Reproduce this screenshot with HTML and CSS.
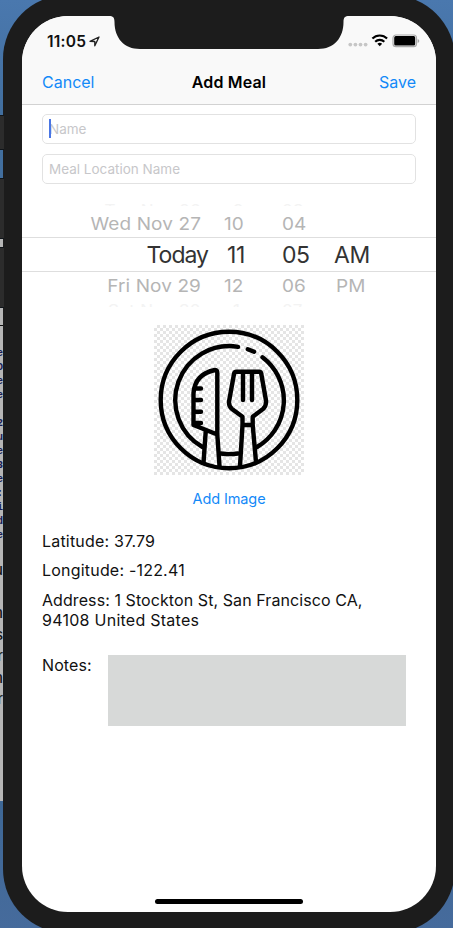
FILE: index.html
```html
<!DOCTYPE html>
<html lang="en">
<head>
<meta charset="utf-8">
<title>Add Meal</title>
<link rel="stylesheet" href="styles.css">
</head>
<body>
<div class="backdrop" aria-hidden="true">
  <div class="tile blue t1"></div>
  <div class="tile dark t2"></div>
  <div class="tile blue t3"></div>
  <div class="tile dark t4"></div>
  <div class="tile light t5"></div>
  <div class="tile dark t6"></div>
  <div class="tile light t7"></div>
  <div class="tile light code"><div>e<br>O<br>e<br>e<br><br>2<br>u<br>e<br>3<br>e<br>:<br>i<br>d<br>e</div></div>
  <div class="tile light prose"><div>u<br><br>n<br>s<br>r<br>n<br>r</div></div>
</div>
<div class="device">
  <div class="screen">
    <header class="top">
      <div class="status">
        <span class="time">11:05</span>
        <svg class="loc" width="11" height="11" viewBox="0 0 11 11"><path d="M1 5.3 10 1 5.8 9.8V5.5Z" fill="none" stroke="#222" stroke-width="1.35" stroke-linejoin="round"/></svg>
        <svg class="signals" width="72" height="14" viewBox="0 0 72 14">
          <g fill="#c6c6c6"><circle cx="2.3" cy="10.6" r="1.9"/><circle cx="7.4" cy="10.6" r="1.9"/><circle cx="12.5" cy="10.6" r="1.9"/><circle cx="17.6" cy="10.6" r="1.9"/></g>
          <g fill="none" stroke="#000" stroke-width="2.1"><path d="M24.4 4.6a10.4 10.4 0 0 1 14.7 0"/><path d="M27.2 7.7a6.5 6.5 0 0 1 9.1 0"/></g>
          <path d="m31.75 12.2-2.4-2.5a3.6 3.6 0 0 1 4.8 0Z"/>
          <rect x="45" y="1" width="23.5" height="11.7" rx="3" fill="#f9f9f9" stroke="#aaa" stroke-width="1.2"/>
          <rect x="46.2" y="2.1" width="21" height="9.5" rx="1.6"/>
          <path d="M69.6 4.9q1.7.5 1.7 2t-1.7 2Z" fill="#aaa"/>
        </svg>
      </div>
      <nav class="nav"><a class="cancel">Cancel</a><h1>Add Meal</h1><a class="save">Save</a></nav>
    </header>
    <main>
      <div class="field name"><i class="caret"></i><span>Name</span></div>
      <div class="field place"><span>Meal Location Name</span></div>
      <section class="picker">
        <div class="row edge before"><span>Tue Nov 26</span><span>9</span><span>03</span><span></span></div>
        <div class="row near prev"><span>Wed Nov 27</span><span>10</span><span>04</span><span></span></div>
        <div class="row current"><span>Today</span><span>11</span><span>05</span><span>AM</span></div>
        <div class="row near next"><span>Fri Nov 29</span><span>12</span><span>06</span><span>PM</span></div>
        <div class="row edge after"><span>Sat Nov 30</span><span>1</span><span>07</span><span></span></div>
      </section>
      <svg class="photo" width="150" height="150" viewBox="0 0 150 150">
        <defs><pattern id="check" width="6" height="6" patternUnits="userSpaceOnUse"><path fill="#fff" d="M0 0h6v6H0z"/><path fill="#e5e5e5" d="M3 0h3v3H3zM0 3h3v3H0z"/></pattern></defs>
        <path fill="url(#check)" d="M0 0h150v150H0z"/>
        <g fill="none" stroke="#000" stroke-width="4.4" stroke-linecap="round" stroke-linejoin="round">
          <circle cx="75" cy="75" r="68.3"/>
          <path d="M84 21.8A54 54 0 0 0 48.5 122"/>
          <path d="M93.8 24.3l6.3 2.5M108.5 32.3A54 54 0 0 1 103 122M67 128.5Q75 129.7 84 128.5"/>
          <path d="M63.3 48V109.5L39.5 100V68Q41 49 61 45Q63.3 44.8 63.3 48ZM40 63.5h7M40 75h7M40 86.7h7M40 98h7M51.7 106.5 49.5 138M63.3 109.5 65.5 141"/>
          <path d="M82.5 46.8H105Q107 46.8 107.3 49L112 75.5Q112.5 81 109 84L98.7 91.7V100H88.5V91.7L78 84Q74.2 81 75.2 75.5L80 49Q80.4 46.8 82.5 46.8ZM89 47v28M98 47v28M88.5 100 86 141M98.7 100 102 137"/>
        </g>
      </svg>
      <a class="add">Add Image</a>
      <section class="details">
        <p class="lat">Latitude: 37.79</p>
        <p class="lon">Longitude: -122.41</p>
        <p class="addr"><span class="l1">Address: 1 Stockton St, San Francisco CA,</span><br><span class="l2">94108 United States</span></p>
      </section>
      <div class="notes"><label>Notes:</label><div class="notebox"></div></div>
    </main>
    <div class="home"></div>
  </div>
  <svg class="notch" width="240" height="34" viewBox="0 0 240 34"><path fill="#1c1c1c" d="M0 0H240C236 0 234.5 1.5 234.5 6C234.5 22 225 33 209 33H31C15 33 5.5 22 5.5 6C5.5 1.5 4 0 0 0Z"/></svg>
</div>
</body>
</html>
```
FILE: styles.css
```css
* { box-sizing: border-box; }
body {
  margin: 0; width: 453px; height: 928px; overflow: hidden; position: relative;
  background: linear-gradient(#4a78ae, #426f9f 12%, #3d6795 85%, #466b9c);
  font-family: Inter, "Liberation Sans", sans-serif; color: #111;
}
a { color: #1389f8; }
h1, p { margin: 0; }

/* Windows showing past the left side of the device */
.backdrop { position: absolute; z-index: 1; left: 0; top: 0; width: 4px; overflow: hidden; }
.tile { overflow: hidden; }
.dark { background: #2c2c2c; border: solid #10151a; border-width: 1px 0; }
.light { background: #b6b6b6; width: 3px; }
.t1 { height: 115px; }
.t2 { height: 35px; }
.t3 { height: 28px; }
.t4 { height: 61px; }
.t5 { height: 8px; }
.t6 { height: 61px; }
.t7 { height: 18px; border-bottom: 1px solid #111; }
.code { height: 221px; padding-top: 21px; font: bold 10px/14px "Liberation Mono", monospace; color: #171b55; }
.code div { margin-left: -3px; width: 6px; }
.prose { height: 254px; padding-top: 12px; font: 17px/21.5px "Liberation Sans", sans-serif; color: #111; }
.prose div { margin-left: -7px; width: 10px; text-align: right; }

.device {
  position: absolute; left: 3px; top: -5px; width: 452px; height: 938px;
  padding: 21px 19px; border-radius: 64px; background: #1c1c1c;
}
.screen {
  width: 414px; height: 896px; border-radius: 46px; background: #fff; overflow: hidden;
  display: flex; flex-direction: column;
}
.notch { position: absolute; left: 105.5px; top: 21px; }

.top { height: 89px; background: #f9f9f9; border-bottom: 1px solid #d2d2d2; }
.status { height: 44px; display: flex; align-items: flex-start; padding: 16px 16px 0 25px; }
.time { font-size: 15.5px; line-height: 19px; font-weight: 600; letter-spacing: .25px; }
.loc { margin: 4px 0 0 3px; }
.signals { margin: 2px 0 0 auto; }
.nav { height: 44px; display: grid; grid-template-columns: 1fr auto 1fr; align-items: center; padding: 0 20px; font-size: 16px; }
.nav h1 { font-size: 16px; font-weight: 600; color: #000; letter-spacing: .15px; }
.save { text-align: right; }

main { display: flex; flex-direction: column; }
.field {
  margin: 9px 20px 0; height: 30px; border: 1px solid #e2e2e2; border-radius: 5px;
  padding-left: 6px; font-size: 13.5px; line-height: 28px; color: #c7c7ca;
}
.field + .field { margin-top: 10px; }
.caret { position: absolute; width: 2px; height: 19px; margin-top: 4px; background: #4a76e4; }

.picker { margin-top: 18px; display: flex; flex-direction: column; white-space: nowrap; }
.row { display: grid; grid-template-columns: 205px 55px 52px 60px; }
.row span:first-child { text-align: right; padding-right: 19px; }
.near { font-size: 19px; color: #b5b5b5; letter-spacing: .1px; }
.near span, .edge span { transform: scaleY(.9); }
.near span:first-child, .edge span:first-child { padding-right: 26px; }
.near span:nth-child(2) { margin-left: -3px; }
.near span:nth-child(4) { margin-left: 2px; }
.prev { height: 31px; line-height: 38px; }
.next { height: 31px; line-height: 27px; }
.current { height: 35px; line-height: 34px; font-size: 23px; letter-spacing: -1px; color: #333; border: solid #dedede; border-width: 1px 0; }
.current span:nth-child(2) { letter-spacing: -.3px; }
.current span:nth-child(n+3) { letter-spacing: -.4px; }
.edge { height: 4px; font-size: 17px; line-height: 18px; color: #f3f3f3; overflow: hidden; letter-spacing: .4px; }
.edge span:nth-child(2) { padding-left: 6px; }
.before { align-items: end; }
.before span { margin-bottom: -3px; }
.after span { margin-top: -1px; }

.photo { margin: 18px 0 0 132px; }
.add { margin-top: 13.5px; text-align: center; font-size: 14.5px; line-height: 19px; letter-spacing: -.1px; }
.details { margin: 23.4px 20px 0; font-size: 16px; line-height: 20px; letter-spacing: .2px; }
.lon { margin-top: 9px; }
.addr { margin-top: 10px; white-space: nowrap; }
.l1 { letter-spacing: .08px; }
.l2 { letter-spacing: .26px; }
.notes { margin: 25.1px 30px 0 20px; display: flex; justify-content: space-between; font-size: 16px; line-height: 21px; letter-spacing: .1px; }
.notebox { width: 298px; height: 71px; background: #d7d9d8; }
.home { width: 148px; height: 5px; border-radius: 3px; background: #000; margin: auto auto 8px 133px; }
```
